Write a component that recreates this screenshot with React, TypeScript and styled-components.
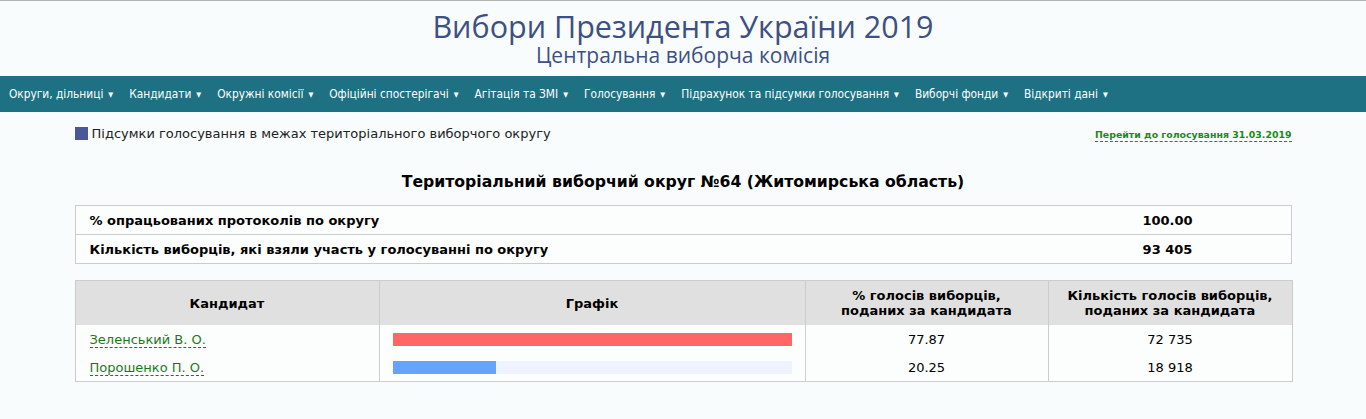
import styled, { createGlobalStyle } from "styled-components";

const GlobalStyle = createGlobalStyle`
  html, body {
    margin: 0;
    padding: 0;
    background: #f8fcfd;
    font-family: "DejaVu Sans", Verdana, sans-serif;
    color: #000;
  }
`;

const menu = [
  "Округи, дільниці",
  "Кандидати",
  "Окружні комісії",
  "Офіційні спостерігачі",
  "Агітація та ЗМІ",
  "Голосування",
  "Підрахунок та підсумки голосування",
  "Виборчі фонди",
  "Відкриті дані",
];

const candidates = [
  { name: "Зеленський В. О.", percent: 77.87, votes: "72 735", color: "#ff6666" },
  { name: "Порошенко П. О.", percent: 20.25, votes: "18 918", color: "#66a3ff" },
];

const maxPercent = Math.max(...candidates.map((c) => c.percent));

export default function App() {
  return (
    <>
      <GlobalStyle />
      <Page>
        <Header>
          <Title>Вибори Президента України 2019</Title>
          <Subtitle>Центральна виборча комісія</Subtitle>
        </Header>
        <Nav>
          {menu.map((item) => (
            <NavItem key={item}>
              {item}
              <Caret>▼</Caret>
            </NavItem>
          ))}
        </Nav>
        <Content>
          <TopRow>
            <Caption>
              <Square />
              Підсумки голосування в межах територіального виборчого округу
            </Caption>
            <DashedLink href="#">Перейти до голосування 31.03.2019</DashedLink>
          </TopRow>
          <Heading>Територіальний виборчий округ №64 (Житомирська область)</Heading>
          <Table>
            <tbody>
              <tr>
                <LabelCell>% опрацьованих протоколів по округу</LabelCell>
                <ValueCell>100.00</ValueCell>
              </tr>
              <tr>
                <LabelCell>Кількість виборців, які взяли участь у голосуванні по округу</LabelCell>
                <ValueCell>93 405</ValueCell>
              </tr>
            </tbody>
          </Table>
          <ResultsTable>
            <colgroup>
              <col style={{ width: 304 }} />
              <col style={{ width: 426 }} />
              <col style={{ width: 243 }} />
              <col style={{ width: 244 }} />
            </colgroup>
            <thead>
              <tr>
                <Th>Кандидат</Th>
                <Th>Графік</Th>
                <Th>
                  % голосів виборців,
                  <br />
                  поданих за кандидата
                </Th>
                <Th>
                  Кількість голосів виборців,
                  <br />
                  поданих за кандидата
                </Th>
              </tr>
            </thead>
            <tbody>
              {candidates.map((c) => (
                <tr key={c.name}>
                  <NameCell>
                    <DashedName href="#">{c.name}</DashedName>
                  </NameCell>
                  <BarCell>
                    <BarTrack>
                      <BarFill
                        $color={c.color}
                        style={{ width: `${(c.percent / maxPercent) * 100}%` }}
                      />
                    </BarTrack>
                  </BarCell>
                  <NumCell>{c.percent.toFixed(2)}</NumCell>
                  <NumCell>{c.votes}</NumCell>
                </tr>
              ))}
            </tbody>
          </ResultsTable>
        </Content>
      </Page>
    </>
  );
}

const Page = styled.div`
  border-top: 1px solid #b4b4b4;
  min-height: 418px;
`;

const Header = styled.header`
  display: flex;
  flex-direction: column;
  align-items: center;
  padding-top: 9px;
  height: 75px;
  box-sizing: border-box;
`;

const Title = styled.h1`
  margin: 0;
  font-family: "Open Sans", sans-serif;
  font-weight: 400;
  font-size: 30.5px;
  line-height: 32px;
  color: #3e5081;
`;

const Subtitle = styled.h2`
  margin: 0;
  font-family: "Open Sans", sans-serif;
  font-weight: 400;
  font-size: 21px;
  line-height: 26px;
  color: #3e5081;
`;

const Nav = styled.nav`
  display: flex;
  align-items: center;
  height: 36px;
  padding-left: 9px;
  gap: 16px;
  background: #1e7183;
`;

const NavItem = styled.span`
  font-family: "DejaVu Sans Condensed", "DejaVu Sans", sans-serif;
  font-size: 11.8px;
  color: #fff;
  white-space: nowrap;
`;

const Caret = styled.span`
  font-size: 7px;
  margin-left: 5px;
  vertical-align: 1px;
`;

const Content = styled.main`
  width: 1217px;
  margin: 0 auto;
  padding-top: 14px;
`;

const TopRow = styled.div`
  display: flex;
  justify-content: space-between;
  align-items: flex-start;
`;

const Caption = styled.div`
  display: flex;
  align-items: center;
  gap: 4px;
  font-size: 13px;
  color: #222;
`;

const Square = styled.span`
  width: 13px;
  height: 13px;
  background: #4a5898;
`;

const DashedLink = styled.a`
  margin-top: 3px;
  font-size: 9.4px;
  font-weight: bold;
  color: #1a8a1a;
  text-decoration: none;
  border-bottom: 1px dashed #1a8a1a;
  padding-bottom: 1px;
`;

const Heading = styled.h3`
  margin: 30px 0 14px;
  text-align: center;
  font-size: 15.7px;
  font-weight: bold;
`;

const Table = styled.table`
  width: 100%;
  border-collapse: collapse;
  border: 1px solid #cccccc;
  background: #fcfdfd;
  margin-bottom: 16px;
`;

const LabelCell = styled.td`
  border-top: 1px solid #cccccc;
  padding: 6px 14px;
  height: 16px;
  font-size: 13px;
  font-weight: bold;
`;

const ValueCell = styled.td`
  border-top: 1px solid #cccccc;
  width: 244px;
  text-align: center;
  font-size: 13px;
  font-weight: bold;
`;

const ResultsTable = styled.table`
  width: 100%;
  table-layout: fixed;
  border-collapse: collapse;
  border: 1px solid #cccccc;
  background: #fcfdfd;
`;

const Th = styled.th`
  background: #e0e0e0;
  border-left: 1px solid #cccccc;
  height: 44px;
  padding: 0 8px;
  font-size: 13px;
  font-weight: bold;
  line-height: 15px;
  text-align: center;
`;

const NameCell = styled.td`
  border-left: 1px solid #cccccc;
  padding: 2px 14px 2px;
  height: 24px;
  font-size: 13px;
`;

const DashedName = styled.a`
  color: #1a7a1a;
  text-decoration: none;
  border-bottom: 1px dashed #1a7a1a;
`;

const BarCell = styled.td`
  border-left: 1px solid #cccccc;
  padding: 0 13px;
`;

const BarTrack = styled.div`
  height: 13px;
  background: #eef3fd;
`;

const BarFill = styled.div<{ $color: string }>`
  height: 100%;
  background: ${(p) => p.$color};
`;

const NumCell = styled.td`
  border-left: 1px solid #cccccc;
  text-align: center;
  font-size: 13px;
`;
